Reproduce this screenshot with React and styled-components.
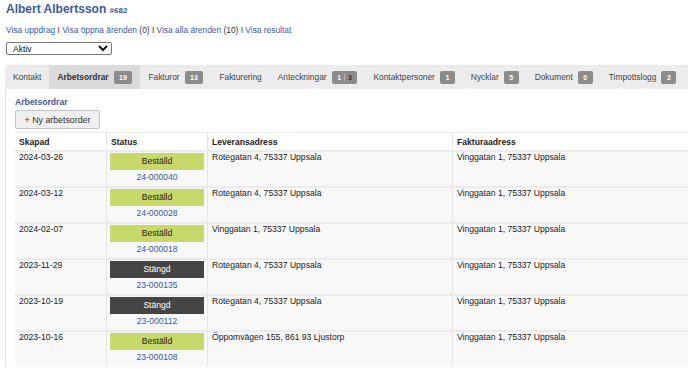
import styled, { createGlobalStyle } from 'styled-components';

const GlobalStyle = createGlobalStyle`
  html, body {
    margin: 0;
    padding: 0;
    overflow: hidden;
    background: #fff;
    font-family: "Liberation Sans", Arial, sans-serif;
    color: #222;
  }
`;

const tabs = [
  { label: 'Kontakt' },
  { label: 'Arbetsordrar', count: '19', active: true },
  { label: 'Fakturor', count: '13' },
  { label: 'Fakturering' },
  { label: 'Anteckningar', split: ['1', '3'] },
  { label: 'Kontaktpersoner', count: '1' },
  { label: 'Nycklar', count: '5' },
  { label: 'Dokument', count: '0' },
  { label: 'Timpottslogg', count: '2' },
];

const orders = [
  { date: '2024-03-26', status: 'Beställd', no: '24-000040', delivery: 'Rotegatan 4, 75337 Uppsala' },
  { date: '2024-03-12', status: 'Beställd', no: '24-000028', delivery: 'Rotegatan 4, 75337 Uppsala' },
  { date: '2024-02-07', status: 'Beställd', no: '24-000018', delivery: 'Vinggatan 1, 75337 Uppsala' },
  { date: '2023-11-29', status: 'Stängd', no: '23-000135', delivery: 'Rotegatan 4, 75337 Uppsala' },
  { date: '2023-10-19', status: 'Stängd', no: '23-000112', delivery: 'Rotegatan 4, 75337 Uppsala' },
  { date: '2023-10-16', status: 'Beställd', no: '23-000108', delivery: 'Öppomvägen 155, 861 93 Ljustorp' },
];

export default function App() {
  return (
    <Page>
      <GlobalStyle />
      <Title>
        Albert Albertsson <small>#682</small>
      </Title>
      <LinkRow>
        <a>Visa uppdrag</a> I <a>Visa öppna ärenden</a> (0) I <a>Visa alla ärenden</a> (10) I{' '}
        <a>Visa resultat</a>
      </LinkRow>
      <StateSelect defaultValue="Aktiv">
        <option>Aktiv</option>
        <option>Inaktiv</option>
      </StateSelect>

      <TabBar>
        {tabs.map(tab => (
          <Tab key={tab.label} $active={tab.active}>
            {tab.label}
            {tab.count && <Badge>{tab.count}</Badge>}
            {tab.split && (
              <Badge>
                {tab.split[0]}
                <Split>{tab.split[1]}</Split>
              </Badge>
            )}
          </Tab>
        ))}
      </TabBar>

      <Panel>
        <SectionTitle>Arbetsordrar</SectionTitle>
        <NewButton>+ Ny arbetsorder</NewButton>
        <OrderTable>
          <thead>
            <tr>
              <th style={{ width: 83 }}>Skapad</th>
              <th style={{ width: 92 }}>Status</th>
              <th style={{ width: 236 }}>Leveransadress</th>
              <th style={{ width: 236 }}>Fakturaadress</th>
            </tr>
          </thead>
          <tbody>
            {orders.map(order => (
              <tr key={order.no}>
                <td>{order.date}</td>
                <StatusCell>
                  <Status $closed={order.status === 'Stängd'}>{order.status}</Status>
                  <OrderLink>{order.no}</OrderLink>
                </StatusCell>
                <td>{order.delivery}</td>
                <td>Vinggatan 1, 75337 Uppsala</td>
              </tr>
            ))}
          </tbody>
        </OrderTable>
      </Panel>
    </Page>
  );
}

const Page = styled.div`
  width: 760px;
  padding: 2px 0 0 5px;
  font-size: 8.6px;
`;

const Title = styled.h1`
  margin: 0 0 0 1px;
  font-size: 12px;
  line-height: 14px;
  font-weight: bold;
  color: #3d5a99;

  small {
    font-size: 8px;
  }
`;

const LinkRow = styled.div`
  margin: 6px 0 0 1px;
  font-size: 8.4px;
  line-height: 12px;
  color: #333;

  a {
    color: #3a59a8;
    cursor: pointer;
  }
`;

const StateSelect = styled.select`
  display: block;
  margin: 6px 0 0 1px;
  width: 106px;
  height: 13px;
  padding: 0 2px;
  font-family: "Liberation Sans", Arial, sans-serif;
  font-size: 8.6px;
  border: 1px solid #767676;
  border-radius: 2px;
  background: #fff;
  color: #111;
`;

const TabBar = styled.div`
  display: flex;
  margin-top: 10px;
  height: 24px;
  background: #ececec;
`;

const Tab = styled.div`
  display: flex;
  align-items: center;
  gap: 5px;
  padding: 0 8px;
  white-space: nowrap;
  font-size: 8.4px;
  font-weight: ${p => (p.$active ? 'bold' : 'normal')};
  background: ${p => (p.$active ? '#dadada' : 'transparent')};
  color: ${p => (p.$active ? '#333' : '#444')};
`;

const Badge = styled.span`
  display: inline-flex;
  align-items: center;
  justify-content: center;
  height: 13px;
  padding: 0 5.5px;
  border-radius: 2px;
  background: #8c8c8c;
  color: #fff;
  font-size: 7px;
  font-weight: bold;
`;

const Split = styled.span`
  margin-left: 3px;
  padding-left: 3px;
  border-left: 1px solid #b5b5b5;
  color: #333;
`;

const Panel = styled.div`
  border-left: 1px solid #e2e2e2;
  padding: 7px 0 0 9px;
`;

const SectionTitle = styled.div`
  font-size: 8.6px;
  font-weight: bold;
  color: #3d5a99;
  line-height: 12px;
`;

const NewButton = styled.button`
  display: block;
  margin-top: 2px;
  width: 85px;
  height: 19px;
  padding: 0;
  border: 1px solid #c4c4c4;
  border-radius: 2px;
  background: #efefef;
  color: #333;
  font-family: "Liberation Sans", Arial, sans-serif;
  font-size: 8.8px;
`;

const OrderTable = styled.table`
  margin-top: 3px;
  border-collapse: collapse;
  font-size: 8.6px;

  th {
    text-align: left;
    font-weight: bold;
    color: #222;
    height: 17px;
    padding: 0 4px;
    background: #fff;
    border-top: 1px solid #ebebeb;
    border-right: 1px solid #e4e4e4;
  }

  td {
    vertical-align: top;
    padding: 0 4px;
    background: #f8f8f8;
    border-top: 2px solid #ebebeb;
    border-right: 1px solid #e6e6e6;
    color: #222;
    line-height: 11px;
  }
`;

const StatusCell = styled.td`
  && {
    padding: 1px 3px 3px;
    line-height: 12px;
  }
`;

const Status = styled.div`
  height: 17px;
  line-height: 17px;
  text-align: center;
  background: ${p => (p.$closed ? '#444' : '#c8d96c')};
  color: ${p => (p.$closed ? '#fff' : '#222')};
`;

const OrderLink = styled.a`
  display: block;
  margin-top: 1px;
  text-align: center;
  color: #3a59a8;
  cursor: pointer;
`;
